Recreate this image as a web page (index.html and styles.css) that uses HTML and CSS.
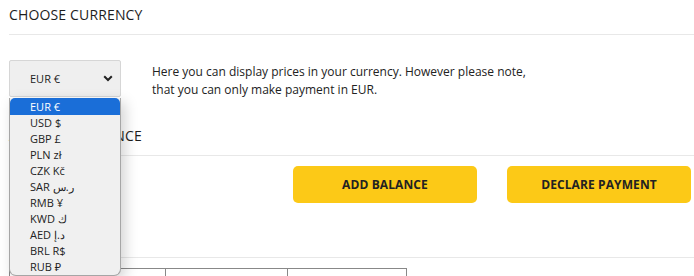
FILE: index.html
```html
<!DOCTYPE html>
<html>
<head>
<meta charset="utf-8">
<link rel="stylesheet" href="styles.css">
</head>
<body>
<div class="page">
  <section class="section">
    <h2 class="title">CHOOSE CURRENCY</h2>
    <div class="currency-row">
      <div class="select-wrap">
        <div class="select">
          <span>EUR €</span>
          <svg class="chevron" width="10" height="7" viewBox="0 0 10 7"><path d="M1.2 1.2 L5 5 L8.8 1.2" fill="none" stroke="#222" stroke-width="2"/></svg>
        </div>
        <ul class="options">
          <li class="active">EUR €</li>
          <li>USD $</li>
          <li>GBP £</li>
          <li>PLN zł</li>
          <li>CZK Kč</li>
          <li>SAR ر.س</li>
          <li>RMB ¥</li>
          <li>KWD ك</li>
          <li>AED د.إ</li>
          <li>BRL R$</li>
          <li>RUB ₽</li>
        </ul>
      </div>
      <p class="note">Here you can display prices in your currency. However please note,<br>that you can only make payment in EUR.</p>
    </div>
  </section>
  <section class="section balance">
    <h2 class="title">ACCOUNT BALANCE</h2>
    <div class="actions">
      <button class="btn">ADD BALANCE</button>
      <button class="btn">DECLARE PAYMENT</button>
    </div>
  </section>
  <div class="table-wrap">
    <table class="table">
      <tr><td class="c1"></td><td class="c2"></td><td class="c3"></td></tr>
    </table>
  </div>
</div>
</body>
</html>
```
FILE: styles.css
```css
html, body {
  margin: 0;
  padding: 0;
  background: #fff;
  overflow: hidden;
}
body {
  font-family: "Open Sans", "Noto Sans", sans-serif;
  color: #222;
  width: 694px;
  height: 276px;
}
.page {
  padding-left: 9px;
  height: 276px;
  overflow: hidden;
}
.title {
  margin: 0;
  font-size: 14px;
  font-weight: 400;
  line-height: 20px;
  letter-spacing: 0.15px;
  padding: 5px 0 9px;
  border-bottom: 1px solid #e8e8e8;
  color: #1d1d1d;
}
.currency-row {
  display: flex;
  align-items: flex-start;
  margin-top: 25px;
  gap: 31px;
}
.select-wrap {
  position: relative;
  width: 112px;
  flex: none;
}
.select {
  box-sizing: border-box;
  height: 37px;
  display: flex;
  align-items: center;
  justify-content: space-between;
  padding: 0 7px 0 20px;
  background: #efefef;
  border: 1px solid #d6d6d6;
  border-radius: 2px;
  font-size: 11px;
}
.chevron {
  display: block;
}
.options {
  position: absolute;
  top: 38px;
  left: 0;
  width: 112px;
  box-sizing: border-box;
  margin: 0;
  padding: 0;
  list-style: none;
  background: #f0f0f0;
  border: 1px solid #a6a6a6;
  border-top: none;
  border-radius: 0 0 7px 7px;
  box-shadow: 4px 4px 14px rgba(0,0,0,0.18);
  font-size: 11px;
  z-index: 5;
}
.options li {
  height: 16px;
  line-height: 16px;
  padding-left: 20px;
  color: #222;
}
.options li.active {
  background: #1a6ed8;
  color: #fff;
  border-radius: 5px 5px 0 0;
  height: 17px;
  line-height: 17px;
}
.note {
  margin: 3px 0 0;
  font-size: 12px;
  line-height: 18px;
  color: #222;
}
.balance {
  margin-top: 22px;
  padding-bottom: 54px;
  border-bottom: 1px solid #e8e8e8;
}
.actions {
  display: flex;
  justify-content: flex-end;
  gap: 30px;
  margin-top: 10px;
  padding-right: 3px;
}
.btn {
  width: 184px;
  height: 37px;
  border: none;
  border-radius: 5px;
  background: #fcc917;
  font-family: "Open Sans", "Noto Sans", sans-serif;
  font-size: 12px;
  font-weight: 700;
  color: #222;
  letter-spacing: 0.1px;
}
.table-wrap {
  margin-top: 10px;
}
.table {
  border-collapse: collapse;
}
.table td {
  border: 1px solid #888;
  height: 20px;
  padding: 0;
}
.c1 { width: 155px; }
.c2 { width: 121px; }
.c3 { width: 118px; }
```
